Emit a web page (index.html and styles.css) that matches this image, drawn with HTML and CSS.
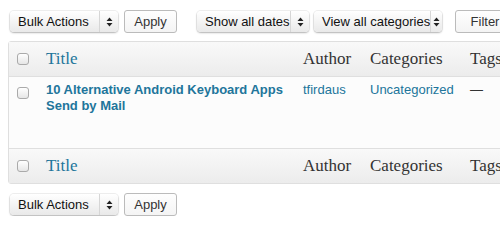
FILE: index.html
```html
<!DOCTYPE html>
<html>
<head>
<meta charset="utf-8">
<link rel="stylesheet" href="styles.css">
</head>
<body>
<div class="page">
  <div class="nav nav-top">
    <div class="sel sel-bulk"><span class="sel-text">Bulk Actions</span><span class="sel-arrow"><svg width="7" height="10" viewBox="0 0 7 10"><path d="M3.5 0.5 L6.5 4 L0.5 4 Z M3.5 9.5 L6.5 6 L0.5 6 Z" fill="#222"/></svg></span></div>
    <div class="btn btn-apply">Apply</div>
    <div class="sel sel-dates"><span class="sel-text">Show all dates</span><span class="sel-arrow"><svg width="7" height="10" viewBox="0 0 7 10"><path d="M3.5 0.5 L6.5 4 L0.5 4 Z M3.5 9.5 L6.5 6 L0.5 6 Z" fill="#222"/></svg></span></div>
    <div class="sel sel-cats"><span class="sel-text">View all categories</span><span class="sel-arrow"><svg width="7" height="10" viewBox="0 0 7 10"><path d="M3.5 0.5 L6.5 4 L0.5 4 Z M3.5 9.5 L6.5 6 L0.5 6 Z" fill="#222"/></svg></span></div>
    <div class="btn btn-filter">Filter</div>
  </div>

  <table class="list">
    <colgroup>
      <col class="c-cb">
      <col class="c-title">
      <col class="c-author">
      <col class="c-cats">
      <col class="c-tags">
    </colgroup>
    <thead>
      <tr>
        <th class="col-cb"><span class="cb"></span></th>
        <th class="col-title"><a class="sort">Title</a></th>
        <th class="col-author">Author</th>
        <th class="col-cats">Categories</th>
        <th class="col-tags">Tags</th>
      </tr>
    </thead>
    <tbody>
      <tr class="row">
        <td class="col-cb"><span class="cb"></span></td>
        <td class="col-title"><a class="post-title">10 Alternative Android Keyboard Apps Send by Mail</a></td>
        <td class="col-author"><a class="link">tfirdaus</a></td>
        <td class="col-cats"><a class="link">Uncategorized</a></td>
        <td class="col-tags">—</td>
      </tr>
    </tbody>
    <tfoot>
      <tr>
        <th class="col-cb"><span class="cb"></span></th>
        <th class="col-title"><a class="sort">Title</a></th>
        <th class="col-author">Author</th>
        <th class="col-cats">Categories</th>
        <th class="col-tags">Tags</th>
      </tr>
    </tfoot>
  </table>

  <div class="nav nav-bottom">
    <div class="sel sel-bulk"><span class="sel-text">Bulk Actions</span><span class="sel-arrow"><svg width="7" height="10" viewBox="0 0 7 10"><path d="M3.5 0.5 L6.5 4 L0.5 4 Z M3.5 9.5 L6.5 6 L0.5 6 Z" fill="#222"/></svg></span></div>
    <div class="btn btn-apply">Apply</div>
  </div>
</div>
</body>
</html>
```

FILE: styles.css
```css
html, body {
  margin: 0;
  padding: 0;
  overflow: hidden;
  background: #ffffff;
}
body {
  font-family: "Liberation Sans", Arial, sans-serif;
  font-size: 13px;
  color: #333;
}
.page {
  padding: 0 0 0 8px;
  width: 600px;
}
.nav {
  display: flex;
  align-items: center;
  height: 23px;
}
.nav-top {
  margin-top: 10px;
  margin-bottom: 8px;
}
.nav-bottom {
  margin-top: 9px;
}
.sel {
  display: flex;
  align-items: center;
  height: 21px;
  box-sizing: border-box;
  border-radius: 4px;
  background: linear-gradient(#ffffff, #e9e9e9);
  box-shadow: 0 0 0 1px rgba(0,0,0,0.06), 0 1px 2px rgba(0,0,0,0.25);
  color: #111;
  font-size: 13px;
}
.sel-text {
  flex: 1;
  padding-left: 8px;
  white-space: nowrap;
}
.sel-arrow {
  width: 18px;
  height: 100%;
  border-left: 1px solid #d6d6d6;
  display: flex;
  align-items: center;
  justify-content: center;
}
.sel-bulk { margin-left: 2px; width: 108px; }
.sel-dates { margin-left: 20px; width: 112px; }
.sel-cats { margin-left: 5px; width: 128px; }
.btn {
  height: 23px;
  box-sizing: border-box;
  border: 1px solid #bbb;
  border-radius: 3px;
  background: linear-gradient(#fefefe, #f4f4f4);
  display: flex;
  align-items: center;
  justify-content: center;
  color: #333;
  font-size: 13px;
}
.btn-apply { margin-left: 6px; width: 53px; }
.btn-filter { margin-left: 13px; width: 60px; }

.list {
  border-collapse: separate;
  border-spacing: 0;
  width: 560px;
  border: 1px solid #dfdfdf;
  border-radius: 3px;
  background: #fcfcfc;
  table-layout: fixed;
}
.c-cb { width: 29px; }
.c-title { width: 257px; }
.c-author { width: 67px; }
.c-cats { width: 100px; }
.list th {
  font-family: Georgia, "Liberation Serif", serif;
  font-weight: normal;
  font-size: 17px;
  color: #333;
  text-align: left;
  height: 34px;
  padding: 0 8px;
  background: linear-gradient(#f9f9f9, #ececec);
  vertical-align: middle;
  white-space: nowrap;
}
.list thead th { border-bottom: 1px solid #dfdfdf; }
.list tfoot th { border-top: 1px solid #dfdfdf; }
.list td {
  vertical-align: top;
  padding: 5px 8px 0;
  height: 71px;
  color: #333;
  line-height: 16px;
  box-sizing: border-box;
}
.list th.col-cb, .list td.col-cb { padding: 0 0 0 8px; }
.list td.col-cb { padding-top: 10px; }
.cb {
  display: block;
  width: 10px;
  height: 10px;
  border: 1px solid #aaa;
  border-radius: 3px;
  background: linear-gradient(#ffffff, #e6e6e6);
}
.sort { color: #21759b; }
.post-title {
  color: #21759b;
  font-weight: bold;
  font-size: 13px;
}
.link { color: #21759b; }
```
